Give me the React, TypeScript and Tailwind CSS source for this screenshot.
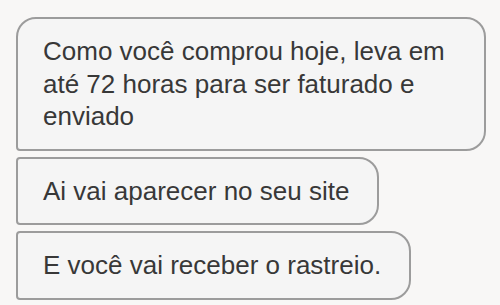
import React from "react";

const bubble =
  "inline-block self-start border-2 border-[#9c9c9c] bg-[#f5f5f5] pl-[25px] pr-[28px] py-[16px] text-[26px] leading-[32.5px] text-[#383838]";

export default function App() {
  return (
    <div
      className="w-[500px] h-[305px] overflow-hidden bg-[#f8f7f6]"
      style={{ fontFamily: '"Liberation Sans", Arial, sans-serif' }}
    >
      <div className="flex flex-col items-start gap-[6px] pl-[16px] pt-[17px]">
        <div className={`${bubble} w-[470px] rounded-t-[20px] rounded-br-[20px] rounded-bl-[4px]`}>
          Como você comprou hoje, leva em até 72 horas para ser faturado e enviado
        </div>
        <div className={`${bubble} rounded-l-[4px] rounded-r-[20px]`}>
          Ai vai aparecer no seu site
        </div>
        <div className={`${bubble} rounded-l-[4px] rounded-r-[20px]`}>
          E você vai receber o rastreio.
        </div>
        <div className={`${bubble} w-[436px] rounded-tl-[4px] rounded-r-[20px] rounded-bl-[20px]`}>
          Qualquer dúvida é só chamar
        </div>
      </div>
    </div>
  );
}
